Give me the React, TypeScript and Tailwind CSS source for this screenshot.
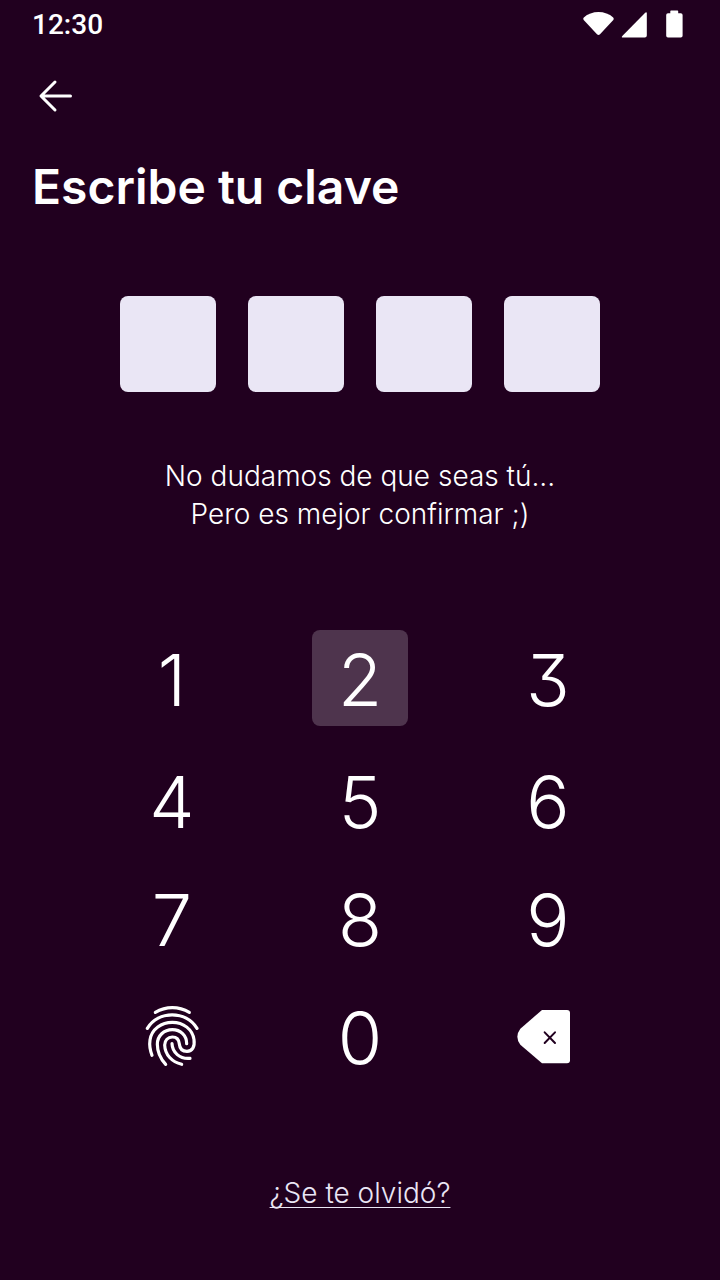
import { useState } from 'react';

const KEYS = ['1', '2', '3', '4', '5', '6', '7', '8', '9'];
const PIN_LENGTH = 4;

function StatusBar() {
  return (
    <div className="flex h-12 items-center justify-between pl-8 pr-9">
      <span className="pt-0.5 font-[Roboto,sans-serif] text-[28px] leading-8 font-medium">12:30</span>
      <svg viewBox="1 0 101 28" className="h-7 w-[101px]" fill="currentColor" aria-hidden="true">
        <path d="M1.8 7.6 C9.5 0.2 23.5 0.2 31.2 7.6 Q32.2 8.8 31.3 10 L18 24.3 Q16.5 25.6 15 24.3 L1.7 10 Q0.8 8.8 1.8 7.6 Z" />
        <path d="M63.2 2.8 Q64.8 1.6 64.8 3.6 V25.5 Q64.8 27.5 62.8 27.5 H41 Q39 27.5 40.3 26 Z" />
        <path d="M89 0.5 H95.5 Q96.2 0.5 96.2 1.2 V3.2 H98.8 Q100.6 3.2 100.6 5 V25.7 Q100.6 27.5 98.8 27.5 H86 Q84.2 27.5 84.2 25.7 V5 Q84.2 3.2 86 3.2 H88.3 V1.2 Q88.3 0.5 89 0.5 Z" />
      </svg>
    </div>
  );
}

function FingerprintIcon() {
  return (
    <svg viewBox="-18 -6 288 288" className="size-24" fill="none" stroke="currentColor" strokeWidth="9.5" strokeLinecap="round" aria-hidden="true">
      <path d="M76 67 C108 48 146 48 178 67" />
      <path d="M52 115 C85 61 168 61 201 115" />
      <path d="M66 196 C60 180 58 163 60 150 C65 117 95 97 127 97 C160 97 188 118 192 149 C195 170 187 184 171 184 C155 184 149 173 148 162 C147 149 139 141 127 141 C114 141 104 151 104 165 C105 195 126 216 155 223" />
      <path d="M107 223 C90 205 82 184 82 163 C82 137 102 119 127 119 C152 119 170 137 170 161" />
      <path d="M126 161 C127 187 149 208 180 205" />
    </svg>
  );
}

function DeleteIcon() {
  return (
    <svg viewBox="0 -6 288 288" className="size-24" aria-hidden="true">
      <path fill="currentColor" d="M126 60 H201 Q210 60 210 69 V211 Q210 220 201 220 H126 L61 164 Q43 140 61 116 Z" />
      <path d="M134 127 L165 159 M165 127 L134 159" fill="none" stroke="#21001f" strokeWidth="6" strokeLinecap="round" />
    </svg>
  );
}

export default function App() {
  const [pin, setPin] = useState('');
  const [active, setActive] = useState('2');

  const press = (key: string) => {
    setActive(key);
    setPin((prev) => (prev.length < PIN_LENGTH ? prev + key : prev));
  };

  const keyClass = 'flex size-24 items-center justify-center rounded-lg pt-1 text-[72px] leading-none font-light cursor-pointer';

  return (
    <div className="min-h-screen bg-[#21001f] font-[Inter,sans-serif] text-white">
      <StatusBar />

      <header className="px-8 pt-6">
        <button type="button" aria-label="Volver" className="block cursor-pointer">
          <svg viewBox="0 0 48 48" className="size-12" fill="none" stroke="currentColor" strokeWidth="3" strokeLinecap="round" strokeLinejoin="round" aria-hidden="true">
            <path d="M38.500 24 H9.500 M23 10 L9 24 L23 38" />
          </svg>
        </button>
        <h1 className="mt-[35px] text-[48px] leading-16 font-semibold">Escribe tu clave</h1>
      </header>

      <main className="flex flex-col items-center pt-[77px] pb-16">
        <div className="flex gap-8">
          {Array.from({ length: PIN_LENGTH }, (_, i) => (
            <input
              key={i} type="password" inputMode="numeric" readOnly
              aria-label={`Dígito ${i + 1}`} value={pin[i] ?? ''}
              className="size-24 rounded-lg bg-[#eae6f5] text-center text-5xl text-[#21001f] outline-none"
            />
          ))}
        </div>

        <p className="mt-[65px] text-center text-[28px] leading-[38px] font-light">
          No dudamos de que seas tú...<br />
          Pero es mejor confirmar ;)
        </p>

        <div className="mt-[97px] grid grid-cols-3 grid-rows-[100px_96px_96px_96px] gap-x-[92px] gap-y-[22px] [font-feature-settings:'cv09']">
          {KEYS.map((key) => (
            <button
              key={key} type="button" onClick={() => press(key)}
              className={`${keyClass} ${active === key ? 'bg-[#4e344d]' : ''}`}
            >
              {key}
            </button>
          ))}
          <button type="button" aria-label="Usar huella" className="size-24 cursor-pointer">
            <FingerprintIcon />
          </button>
          <button type="button" onClick={() => press('0')} className={keyClass}>0</button>
          <button type="button" aria-label="Borrar" onClick={() => setPin((prev) => prev.slice(0, -1))} className="size-24 cursor-pointer">
            <DeleteIcon />
          </button>
        </div>

        <a href="#" className="mt-[90px] text-[28px] leading-[38px] font-light text-[#eae6f5] underline decoration-1 underline-offset-4 [text-decoration-skip-ink:none]">
          ¿Se te olvidó?
        </a>
      </main>
    </div>
  );
}
